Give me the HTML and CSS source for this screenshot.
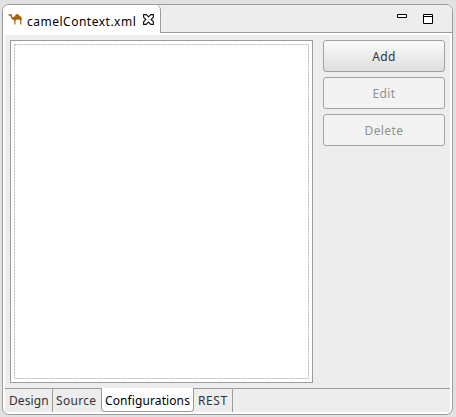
FILE: index.html
```html
<!DOCTYPE html>
<html lang="en">
<head>
<meta charset="utf-8">
<title>camelContext.xml</title>
<link rel="stylesheet" href="styles.css">
</head>
<body>
<main class="editor">
  <header class="strip">
    <div class="file-tab">
      <svg class="camel" width="15" height="13" viewBox="0 0 15 13"><path d="M.2 1.8 2 .9l1.6.3.5 2.3 1 .7L6.5 3.5C7.3 2 8.2.8 9.2.9c1.300 0 1.800 1.800 3 2.300C13.600 3.700 14 5 14 7.500L13.400 6l-.1 5.500H12L12.300 8 11.300 6.500 8.500 6.800 7.600 7.300 7.400 11.500H6.300V7.500L4.500 6.500 3 5 2.500 2.800.4 2.600z" fill="#a56209"/></svg>
      <span class="file-name">camelContext.xml</span>
      <svg class="close" width="11" height="11" viewBox="0 0 11 11"><path d="M.6.6h2.600l2.300 2.300L7.800.6h2.600v2.600L8.100 5.500l2.300 2.300v2.600H7.800L5.500 8.100l-2.300 2.300H.6V7.800l2.300-2.300L.6 3.200z" fill="#fff" stroke="#111" stroke-width="1.1"/></svg>
    </div>
    <div class="window-tools">
      <svg width="10" height="4" viewBox="0 0 10 4"><path d="M.5.5h9v3h-9z" fill="#fff" stroke="#000"/></svg>
      <svg width="10" height="10" viewBox="0 0 10 10"><path d="M.5.5h9v9h-9zM0 2.5h10" fill="#fff" stroke="#000"/></svg>
    </div>
  </header>
  <div class="page">
    <section class="content">
      <div class="list"><svg width="295" height="335"><rect x=".5" y=".5" width="294" height="334" fill="none" stroke="#b8b8b8" stroke-dasharray="2 1"/></svg></div>
      <div class="actions">
        <button class="add">Add</button>
        <button class="edit" disabled>Edit</button>
        <button class="delete" disabled>Delete</button>
      </div>
    </section>
    <nav class="page-tabs">
      <span class="page-tab design">Design</span>
      <span class="page-tab source">Source</span>
      <span class="page-tab active">Configurations</span>
      <span class="page-tab rest">REST</span>
    </nav>
  </div>
</main>
</body>
</html>
```
FILE: styles.css
```css
* { box-sizing: border-box; }
body {
  margin: 0;
  height: 417px;
  padding: 4px 3px 2px 2px;
  overflow: hidden;
  background: #e1e1e1;
  color: #2e3436;
  font: 12px/16px "Noto Sans", sans-serif;
}
svg { display: block; flex: none; }
.editor {
  display: flex;
  flex-direction: column;
  height: 411px;
  border: 1px solid #9c9c9c;
  border-radius: 7px;
  background: #fff;
  overflow: hidden;
}
.strip {
  display: flex;
  justify-content: space-between;
  height: 28px;
  background: linear-gradient(#9c9c9c, #9c9c9c) bottom / 100% 1px no-repeat #ededed;
}
.file-tab {
  display: flex;
  width: 158px;
  padding-left: 5px;
  background: #fff;
  border-right: 1px solid #9c9c9c;
  border-top-right-radius: 5px;
  color: #000;
}
.camel { margin-top: 8px; }
.file-name { width: 116px; margin: 9px 0 0 4px; letter-spacing: .5px; white-space: nowrap; }
.close { margin: 9px 0 0 0; }
.window-tools { display: flex; gap: 16px; padding: 9px 19px 0 0; }
.page { margin: 2px; height: 377px; background: #ededed; }
.content { display: flex; gap: 10px; height: 353px; padding: 5px; }
.list { width: 303px; height: 343px; padding: 3px; border: 1px solid #9c9c9c; background: #fff; }
.actions { display: flex; flex-direction: column; gap: 5px; width: 122px; }
button {
  height: 32px;
  padding: 2px 0 0;
  border: 1px solid #a1a1a1;
  border-radius: 3px;
  background: linear-gradient(#fafafa, #dedede);
  color: #2e3436;
  font: 12px/16px "Noto Sans", sans-serif;
  letter-spacing: .4px;
}
button:disabled { background: #f3f3f3; color: #8e9191; }
.page-tabs {
  display: flex;
  height: 24px;
  background: linear-gradient(#9c9c9c, #9c9c9c) top / 100% 1px no-repeat;
}
.page-tab { padding: 5px 0 0 4px; border-right: 1px solid #9c9c9c; white-space: nowrap; letter-spacing: .1px; }
.design { width: 48px; }
.source { width: 48px; padding-left: 3px; border-right: 0; letter-spacing: .3px; }
.active {
  width: 93px;
  padding-left: 3px;
  border: 1px solid #9c9c9c;
  border-top: 0;
  border-radius: 0 0 4px 4px;
  background: #fff;
  color: #000;
}
.rest { width: 39px; letter-spacing: .6px; }
```
